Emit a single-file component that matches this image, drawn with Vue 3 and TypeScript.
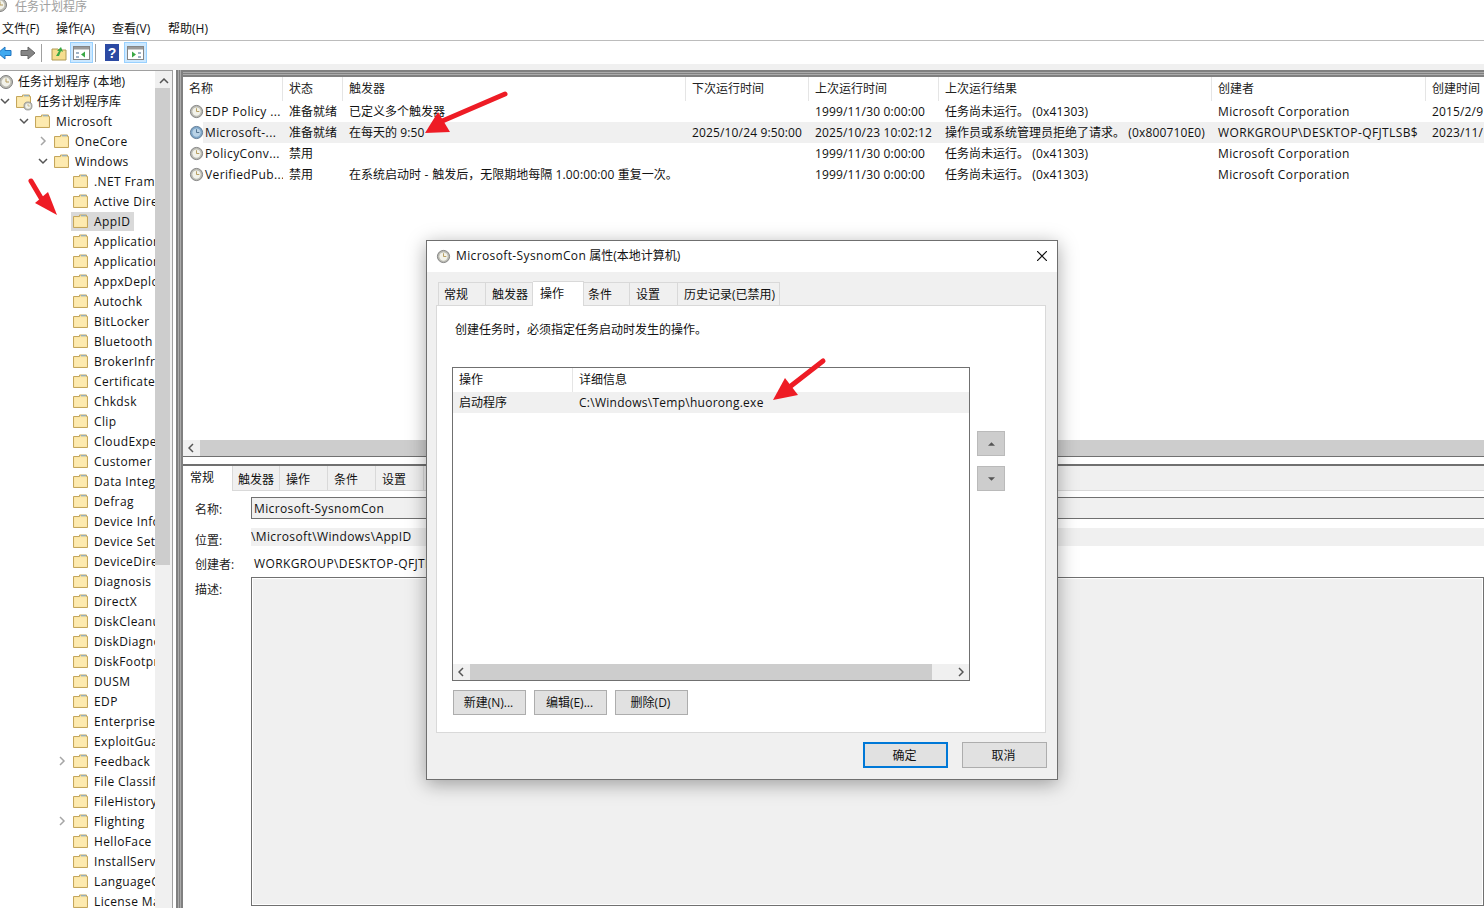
<template>
  <div class="app">
    <div class="titlebar">
      <svg class="clock" viewBox="0 0 16 16"><use href="#clock-gray" /></svg>
      <span>任务计划程序</span>
    </div>
    <div class="menubar">
      <span v-for="m in menus" :key="m">{{ m }}</span>
    </div>
    <div class="toolbar">
      <svg class="tb-back" width="15" height="16" viewBox="0 0 15 16"><path d="M0 8l7-6v3.500h6v5H7V14z" fill="#3fa9f0" stroke="#1f74c0" /></svg>
      <svg class="tb-fwd" width="17" height="16" viewBox="0 0 17 16"><path d="M16 8L9 2v3.500H2v5h7V14z" fill="#858585" stroke="#666" /></svg>
      <i class="tb-sep"></i>
      <svg class="tb-up" width="16" height="16" viewBox="0 0 16 16"><path d="M1 4h6l1 1h7v10H1z" fill="#f6dd8e" stroke="#b09a55" /><path d="M5 11l3-5-2 0 4-4 2 5-2-1-2 5z" fill="#3aa845" /></svg>
      <span class="tb-on"><svg width="17" height="14" viewBox="0 0 17 14"><rect x=".5" y=".5" width="16" height="13" fill="#fff" stroke="#858585" /><path d="M1 1h15v2.500H1z" fill="#9a9a9a" /><path d="M3 6h3v2H3zM3 10h3v2H3z" fill="#9fb2c6" /><path d="M12 5.500l-4 3 4 3z" fill="#3aa845" /></svg></span>
      <i class="tb-sep"></i>
      <svg class="tb-help" width="14" height="17" viewBox="0 0 14 17"><rect width="14" height="17" fill="#2c4aa3" /><text x="7" y="14" text-anchor="middle" fill="#fff" class="q">?</text></svg>
      <span class="tb-on"><svg width="17" height="14" viewBox="0 0 17 14"><rect x=".5" y=".5" width="16" height="13" fill="#fff" stroke="#858585" /><path d="M1 1h15v2.500H1z" fill="#9a9a9a" /><path d="M11 6h3v2h-3zM11 10h3v2h-3z" fill="#9fb2c6" /><path d="M5 5.500l4 3-4 3z" fill="#3aa845" /></svg></span>
    </div>

    <div class="workspace">
      <aside class="tree">
        <div class="tree-rows">
          <div v-for="(row, r) in treeRows" :key="r" class="tree-row" :style="{ paddingLeft: row.indent + 'px' }">
            <svg v-if="row.caret === 'open'" class="caret" viewBox="0 0 10 10"><path d="M1 3l4 4 4-4" /></svg>
            <svg v-else-if="row.caret === 'closed'" class="caret light" viewBox="0 0 10 10"><path d="M3 1l4 4-4 4" /></svg>
            <span v-else-if="row.indent" class="caret"></span>
            <div class="tree-item" :class="{ picked: row.picked }">
              <svg v-if="row.icon === 'clock'" class="clock" viewBox="0 0 16 16"><use href="#clock-gray" /></svg>
              <svg v-else class="folder" viewBox="0 0 15 14">
                <path d="M.5 2.500h6V1h7v1.500h1v11H.5z" fill="#fbe3a0" stroke="#c4a65c" />
                <path d="M1.500 3.500h12v9h-12z" fill="#fdeab0" />
                <path d="M8 1.800h5" stroke="#7aa7d0" />
              </svg>
              <span>
                <span v-for="(p, i) in parts(row.label)" :key="i" :class="p.cls">{{ p.t }}</span>
              </span>
            </div>
            <svg v-if="row.icon === 'lib'" class="lib-clock" viewBox="0 0 16 16"><use href="#clock-gray" /></svg>
          </div>
        </div>
        <div class="tree-scroll">
          <svg class="sb-arrow" viewBox="0 0 10 6"><path d="M1 5l4-4 4 4" /></svg>
          <div class="tree-thumb"></div>
        </div>
      </aside>
      <div class="divider"></div>

      <main class="panes">
        <section class="list-pane">
          <div class="grid-head">
            <span v-for="c in columns" :key="c.title" :style="{ width: c.width + 'px' }">{{ c.title }}</span>
          </div>
          <div v-for="t in tasks" :key="t.cells[0]" class="grid-row" :class="{ picked: t.picked }">
            <span v-for="(cell, i) in t.cells" :key="i" class="grid-cell" :style="{ width: columns[i].width + 'px' }">
              <svg v-if="i === 0" class="clock" viewBox="0 0 16 16"><use :href="t.picked ? '#clock-blue' : '#clock-gray'" /></svg>
              <em :class="{ cjk: hasCjk(cell) }"><span v-for="(p, k) in parts(cell)" :key="k" :class="p.cls">{{ p.t }}</span></em>
            </span>
          </div>
          <div class="list-scroll">
            <svg class="sb-arrow side" viewBox="0 0 6 10"><path d="M5 1L1 5l4 4" /></svg>
            <div class="list-track"></div>
          </div>
        </section>

        <section class="detail-pane">
          <div class="detail-tabs">
            <span class="active">常规</span>
            <span v-for="d in detailTabs" :key="d.t" :style="{ width: d.w + 'px' }">{{ d.t }}</span>
          </div>
          <div class="detail-form">
            <label>名称:</label>
            <div class="field"><span class="lat">Microsoft-SysnomCon</span></div>
            <label>位置:</label>
            <div class="field plain"><span class="lat">\Microsoft\Windows\AppID</span></div>
            <label>创建者:</label>
            <div class="field bare"><span class="lat">WORKGROUP\DESKTOP-QFJTLSB$</span></div>
            <label>描述:</label>
            <div class="field desc"></div>
          </div>
        </section>
      </main>
    </div>

    <div class="dialog">
      <header class="dlg-title">
        <svg class="clock" viewBox="0 0 16 16"><use href="#clock-gray" /></svg>
        <span><span class="lat">Microsoft-SysnomCon</span> 属性(本地计算机)</span>
        <svg class="close" viewBox="0 0 10 10"><path d="M0 0l10 10M10 0L0 10" /></svg>
      </header>
      <div class="dlg-tabs">
        <span v-for="d in dialogTabs" :key="d.t" :class="{ active: d.active }" :style="{ width: d.w + 'px' }">{{ d.t }}</span>
      </div>
      <div class="dlg-body">
        <p>创建任务时，必须指定任务启动时发生的操作。</p>
        <div class="action-wrap">
          <div class="action-box">
            <div class="action-head"><span>操作</span><span>详细信息</span></div>
            <div class="action-row"><span>启动程序</span><span class="path">C:\Windows\Temp\huorong.exe</span></div>
            <div class="action-fill"></div>
            <div class="action-scroll">
              <svg class="sb-arrow side" viewBox="0 0 6 10"><path d="M5 1L1 5l4 4" /></svg>
              <div class="action-thumb"></div>
              <svg class="sb-arrow side" viewBox="0 0 6 10"><path d="M1 1l4 4-4 4" /></svg>
            </div>
          </div>
          <div class="updown">
            <button><svg viewBox="0 0 8 4"><path d="M4 0l4 4H0z" /></svg></button>
            <button><svg viewBox="0 0 8 4"><path d="M0 0h8L4 4z" /></svg></button>
          </div>
        </div>
        <div class="action-btns">
          <button>新建(N)...</button>
          <button>编辑(E)...</button>
          <button>删除(D)</button>
        </div>
      </div>
      <footer class="dlg-foot">
        <button class="primary">确定</button>
        <button>取消</button>
      </footer>
    </div>

    <!-- red annotation arrows drawn over the screenshot -->
    <svg class="red-arrow a1" width="90" height="50" viewBox="0 0 90 50"><path d="M85 6L20 34" class="shaft" /><path d="M5 45l25-1-12-20z" class="head" /></svg>
    <svg class="red-arrow a2" width="34" height="44" viewBox="0 0 34 44"><path d="M4 6l13 22" class="shaft" /><path d="M30 40L8 28l13-11z" class="head" /></svg>
    <svg class="red-arrow a3" width="58" height="48" viewBox="0 0 58 48"><path d="M53 5L17 33" class="shaft" /><path d="M3 44l25-5-13-17z" class="head" /></svg>

    <svg width="0" height="0" class="defs">
      <defs>
        <g id="clock-gray">
          <circle cx="8" cy="8" r="6.500" fill="#bcbcb4" stroke="#7f7f7f" />
          <circle cx="8" cy="8" r="4.400" fill="#f2f2ea" />
          <path d="M8 4.500V8h3" fill="none" stroke="#b39a5a" />
        </g>
        <g id="clock-blue">
          <circle cx="8" cy="8" r="6.500" fill="#7fa7c9" stroke="#5f7a94" />
          <circle cx="8" cy="8" r="4.400" fill="#b9d2e6" />
          <path d="M8 4.500V8h3" fill="none" stroke="#4d6f8c" />
        </g>
      </defs>
    </svg>
  </div>
</template>

<script setup lang="ts">
interface TreeRow {
  label: string
  indent: number
  caret?: 'open' | 'closed'
  icon?: 'clock' | 'lib'
  picked?: boolean
}

const menus = ['文件(F)', '操作(A)', '查看(V)', '帮助(H)']

// Folders under Windows, top to bottom
const folders = [
  '.NET Framework', 'Active Directory', 'AppID', 'Application', 'Application', 'AppxDeployment',
  'Autochk', 'BitLocker', 'Bluetooth', 'BrokerInfra', 'CertificateServices', 'Chkdsk', 'Clip',
  'CloudExperience', 'Customer', 'Data Integrity', 'Defrag', 'Device Information', 'Device Setup',
  'DeviceDirectory', 'Diagnosis', 'DirectX', 'DiskCleanup', 'DiskDiagnostic', 'DiskFootprint', 'DUSM',
  'EDP', 'Enterprise', 'ExploitGuard', 'Feedback', 'File Classification', 'FileHistory', 'Flighting',
  'HelloFace', 'InstallService', 'LanguageComponents', 'License Manager',
]
const withCaret = ['Feedback', 'Flighting']

const treeRows: TreeRow[] = [
  { label: '任务计划程序 (本地)', indent: 0, icon: 'clock' },
  { label: '任务计划程序库', indent: 2, caret: 'open', icon: 'lib' },
  { label: 'Microsoft', indent: 21, caret: 'open' },
  { label: 'OneCore', indent: 40, caret: 'closed' },
  { label: 'Windows', indent: 40, caret: 'open' },
  ...folders.map((label) => ({
    label,
    indent: 59,
    caret: withCaret.includes(label) ? ('closed' as const) : undefined,
    picked: label === 'AppID',
  })),
]

const columns = [
  { title: '名称', width: 100 },
  { title: '状态', width: 60 },
  { title: '触发器', width: 343 },
  { title: '下次运行时间', width: 123 },
  { title: '上次运行时间', width: 130 },
  { title: '上次运行结果', width: 273 },
  { title: '创建者', width: 214 },
  { title: '创建时间', width: 70 },
]

const tasks = [
  { cells: ['EDP Policy ...', '准备就绪', '已定义多个触发器', '', '1999/11/30 0:00:00', '任务尚未运行。 (0x41303)', 'Microsoft Corporation', '2015/2/9'] },
  { picked: true, cells: ['Microsoft-...', '准备就绪', '在每天的 9:50', '2025/10/24 9:50:00', '2025/10/23 10:02:12', '操作员或系统管理员拒绝了请求。 (0x800710E0)', 'WORKGROUP\\DESKTOP-QFJTLSB$', '2023/11/'] },
  { cells: ['PolicyConv...', '禁用', '', '', '1999/11/30 0:00:00', '任务尚未运行。 (0x41303)', 'Microsoft Corporation', ''] },
  { cells: ['VerifiedPub...', '禁用', '在系统启动时 - 触发后，无限期地每隔 1.00:00:00 重复一次。', '', '1999/11/30 0:00:00', '任务尚未运行。 (0x41303)', 'Microsoft Corporation', ''] },
]

const detailTabs = [
  { t: '触发器', w: 46 },
  { t: '操作', w: 48 },
  { t: '条件', w: 48 },
  { t: '设置', w: 48 },
]

const dialogTabs = [
  { t: '常规', w: 48 },
  { t: '触发器', w: 47 },
  { t: '操作', w: 51, active: true },
  { t: '条件', w: 46 },
  { t: '设置', w: 48 },
  { t: '历史记录(已禁用)', w: 102 },
]

function hasCjk(text: string) {
  return /[^\x00-\x7f]/.test(text)
}

// Latin text runs wider than the CJK next to it, so split the runs and space them apart
function parts(text: string) {
  const runs = text.match(/[\x00-\x7f]+|[^\x00-\x7f]+/g) || []
  return runs.map((t) => ({
    t,
    cls: hasCjk(t) ? '' : /\d/.test(t) ? 'num' : 'lat',
  }))
}
</script>

<style>
html, body {
  margin: 0;
  height: 100%;
  overflow: hidden;
  background: #fff;
}
</style>

<style scoped>
.app {
  position: relative;
  width: 1484px;
  height: 908px;
  overflow: hidden;
  display: flex;
  flex-direction: column;
  font: 12px "Open Sans", "Noto Sans CJK SC", sans-serif;
  color: #111;
  background: #fff;
}

.lat { letter-spacing: 0.38px; }
.num { letter-spacing: 0.15px; }
.defs { position: absolute; }
.clock { width: 16px; height: 16px; flex: none; }

.titlebar {
  height: 13px;
  display: flex;
  align-items: flex-end;
  gap: 7px;
  margin-left: -8px;
  color: #a0a0a0;
  overflow: hidden;
  line-height: 13px;
}

.menubar {
  height: 28px;
  display: flex;
  align-items: center;
  padding: 2px 0 0 2px;
  box-sizing: border-box;
  border-bottom: 1px solid #bcbcbc;
}
.menubar span { width: 56px; flex: none; }
.menubar span:first-child { width: 54px; }

.toolbar {
  height: 23px;
  display: flex;
  align-items: center;
  background: #fff;
  margin-left: -2px;
}
.tb-fwd { margin-left: 6px; }
.tb-sep { width: 1px; height: 18px; background: #a0a0a0; margin: 0 8px 0 5px; }
.tb-up { margin-left: 1px; margin-right: 3px; }
.tb-on {
  width: 23px;
  height: 21px;
  display: flex;
  align-items: center;
  justify-content: center;
  background: #cce8ff;
  border: 1px solid #99d1ff;
  box-sizing: border-box;
}
.tb-on + .tb-sep { margin-left: 2px; margin-right: 9px; }
.tb-help { margin-right: 5px; }
.q { font: bold 14px "Liberation Sans", sans-serif; }

.workspace {
  flex: 1;
  min-height: 0;
  display: flex;
  background: #f0f0f0;
  padding-top: 6px;
}

.tree {
  width: 173px;
  flex: none;
  display: flex;
  box-sizing: border-box;
  border-top: 1px solid #a0a0a0;
  border-right: 1px solid #a0a0a0;
  background: #fff;
  overflow: hidden;
}
.tree-rows { width: 155px; flex: none; overflow: hidden; }
.tree-row {
  height: 20px;
  display: flex;
  align-items: center;
  white-space: nowrap;
  position: relative;
}
.tree-item {
  display: flex;
  align-items: center;
  height: 19px;
  margin: 1px 0 0 -2px;
  padding: 0 4px 0 2px;
  flex: none;
}
.tree-item > span { position: relative; }
.tree-row:nth-child(-n + 2) .tree-item > span { top: -1px; }
.tree-item.picked { background: #d9d9d9; }
.caret { width: 10px; height: 10px; flex: none; margin: 0 6px 0 -2px; fill: none; stroke: #555; stroke-width: 1.500; }
.caret.light { stroke: #a6a6a6; }
.folder { width: 15px; height: 14px; flex: none; margin: -1px 6px 0 0; }
.tree-item .clock { margin: 0 4px 0 -2px; }
.lib-clock { position: absolute; left: 23px; top: 10px; width: 10px; height: 10px; }

.tree-scroll {
  width: 17px;
  flex: none;
  background: #f0f0f0;
  display: flex;
  flex-direction: column;
  align-items: center;
}
.sb-arrow { width: 10px; height: 6px; margin: 7px 0 4px; fill: none; stroke: #555; stroke-width: 1.500; flex: none; }
.sb-arrow.side { width: 6px; height: 10px; margin: 0 5px; }
.tree-thumb { width: 15px; height: 477px; background: #cdcdcd; align-self: flex-start; }

/* splitter: white gap, then grey stripes */
.divider {
  width: 10px;
  flex: none;
  background: linear-gradient(90deg, #fff 0 3px, #808080 3px 5px, #ababab 5px 6px, #808080 6px 7px, #ababab 7px 8px, #808080 8px 10px);
}

.panes {
  flex: 1;
  min-width: 0;
  display: flex;
  flex-direction: column;
  background: #fff;
}

.list-pane {
  height: 387px;
  flex: none;
  padding-top: 7px;
  border-bottom: 1px solid #707070;
  box-sizing: border-box;
  display: flex;
  flex-direction: column;
  overflow: hidden;
  background: linear-gradient(180deg, #808080 0 2px, #ababab 2px 3px, #808080 3px 4px, #ababab 4px 5px, #808080 5px 7px, #fff 7px);
}
.grid-head {
  height: 24px;
  flex: none;
  display: flex;
  white-space: nowrap;
}
.grid-head span {
  flex: none;
  box-sizing: border-box;
  padding: 2px 0 0 6px;
  border-right: 1px solid #e5e5e5;
  color: #222;
}
.grid-row {
  height: 21px;
  flex: none;
  display: flex;
  align-items: center;
  white-space: nowrap;
}
.grid-row.picked { background: linear-gradient(90deg, #fff 20px, #f0f0f0 20px); }
.grid-cell {
  flex: none;
  display: flex;
  align-items: center;
  box-sizing: border-box;
  padding-left: 6px;
  overflow: hidden;
}
.grid-cell em { font-style: normal; }
.grid-cell em.cjk { position: relative; top: -1px; }
.grid-cell .clock { width: 15px; height: 15px; margin-right: 1px; }
.list-scroll {
  margin-top: auto;
  height: 16px;
  flex: none;
  display: flex;
  align-items: center;
  background: #f0f0f0;
}
.list-track { flex: 1; height: 100%; margin-left: 1px; background: #cdcdcd; }

.detail-pane {
  flex: 1;
  min-height: 0;
  margin-top: 7px;
  border-top: 2px solid #707070;
  display: flex;
  flex-direction: column;
}
.detail-tabs {
  height: 25px;
  flex: none;
  box-sizing: border-box;
  background: #f0f0f0;
  border-bottom: 1px solid #d9d9d9;
  display: flex;
}
.detail-tabs span {
  flex: none;
  box-sizing: border-box;
  padding-left: 6px;
  line-height: 27px;
  border-right: 1px solid #d9d9d9;
}
.detail-tabs span:nth-child(2) { padding-left: 4px; }
.detail-tabs .active { width: 50px; height: 25px; background: #fff; line-height: 24px; margin-right: 1px; padding-left: 7px; }

.detail-form {
  display: grid;
  grid-template-columns: 56px 1fr;
  grid-template-rows: 31px 26px 23px 1fr;
  flex: 1;
  min-height: 0;
  padding: 6px 0 2px 12px;
}
.detail-form label { line-height: 18px; padding-top: 4px; color: #222; }
.detail-form label:nth-of-type(3) { padding-top: 2px; }
.field { box-sizing: border-box; height: 22px; line-height: 22px; white-space: nowrap; overflow: hidden; }
.field { border: 1px solid #707070; background: #f0f0f0; padding-left: 2px; border-right: 0; }
.field.plain { height: 18px; border: 0; padding: 0; line-height: 18px; }
.field.bare { height: 18px; border: 0; background: none; padding-left: 3px; line-height: 20px; }
.field.desc { height: auto; border: 1px solid #707070; box-shadow: inset 0 0 0 1px #fff; }

.dialog {
  position: absolute;
  left: 426px;
  top: 240px;
  width: 632px;
  height: 540px;
  box-sizing: border-box;
  border: 1px solid #6f6f6f;
  background: #f0f0f0;
  box-shadow: 0 4px 18px rgba(0, 0, 0, 0.35);
  display: flex;
  flex-direction: column;
}
.dlg-title {
  height: 31px;
  flex: none;
  display: flex;
  align-items: center;
  background: #fff;
  padding: 0 10px 3px 9px;
  box-sizing: border-box;
  gap: 5px;
}
.dlg-title .clock { width: 15px; height: 15px; margin-top: 2px; }
.close { width: 10px; height: 10px; margin: 2px 0 0 auto; stroke: #111; fill: none; stroke-width: 1.200; }

.dlg-tabs {
  height: 33px;
  flex: none;
  display: flex;
  align-items: flex-end;
  padding-left: 11px;
  position: relative;
}
.dlg-tabs span {
  box-sizing: border-box;
  height: 23px;
  flex: none;
  background: #f0f0f0;
  border: 1px solid #d9d9d9;
  border-left: 0;
  border-bottom: 0;
  padding: 2px 0 0 6px;
  white-space: nowrap;
}
.dlg-tabs span:first-child { border-left: 1px solid #d9d9d9; padding-left: 5px; }
.dlg-tabs span:nth-child(4) { padding-left: 4px; }
.dlg-tabs .active {
  height: 25px;
  background: #fff;
  position: relative;
  top: 1px;
  padding: 2px 0 0 7px;
  z-index: 1;
}

.dlg-body {
  margin: 0 11px 0 9px;
  height: 428px;
  flex: none;
  box-sizing: border-box;
  background: #fff;
  border: 1px solid #d9d9d9;
  padding: 15px 0 0 15px;
  display: flex;
  flex-direction: column;
}
.dlg-body p { margin: 0; line-height: 18px; padding-left: 3px; }

.action-wrap { display: flex; margin-top: 28px; }
.action-box {
  width: 518px;
  height: 314px;
  flex: none;
  box-sizing: border-box;
  border: 1px solid #707070;
  display: flex;
  flex-direction: column;
}
.action-head { height: 24px; flex: none; display: flex; line-height: 23px; }
.action-head span:first-child { width: 120px; box-sizing: border-box; padding-left: 6px; border-right: 1px solid #e5e5e5; }
.action-head span:last-child { padding-left: 6px; }
.action-row { height: 21px; flex: none; display: flex; line-height: 21px; background: #f0f0f0; }
.action-row span:first-child { width: 120px; padding-left: 6px; box-sizing: border-box; }
.action-row .path { padding-left: 6px; letter-spacing: 0.26px; }
.action-fill { flex: 1; }
.action-scroll { height: 16px; flex: none; display: flex; align-items: center; background: #f0f0f0; }
.action-thumb { flex: 1; height: 100%; margin: 0 21px 0 1px; background: #cdcdcd; }

.updown { display: flex; flex-direction: column; gap: 10px; margin: 64px 0 0 7px; }
.updown button {
  width: 28px;
  height: 25px;
  padding: 0;
  border: 1px solid #bababa;
  background: #cdcdcd;
  display: flex;
  align-items: center;
  justify-content: center;
}
.updown svg { width: 7px; height: 4px; fill: #555; }

.action-btns { display: flex; gap: 8px; margin: 9px 0 0 1px; }
.action-btns button, .dlg-foot button {
  font: inherit;
  color: #111;
  background: #e1e1e1;
  border: 1px solid #adadad;
  padding: 0;
  box-sizing: border-box;
}
.action-btns button { width: 73px; height: 25px; padding: 0 2px 2px 0; }

.dlg-foot { flex: 1; display: flex; justify-content: flex-end; gap: 14px; padding: 9px 10px 0 0; }
.dlg-foot button { width: 85px; height: 26px; padding-right: 2px; }
.dlg-foot .primary { border: 2px solid #0078d7; }

.red-arrow { position: absolute; overflow: visible; }
.red-arrow .shaft { stroke: #ee1c25; stroke-width: 5; stroke-linecap: round; fill: none; }
.red-arrow .head { fill: #ee1c25; }
.a1 { left: 420px; top: 88px; }
.a2 { left: 27px; top: 175px; }
.a3 { left: 770px; top: 356px; }
</style>
